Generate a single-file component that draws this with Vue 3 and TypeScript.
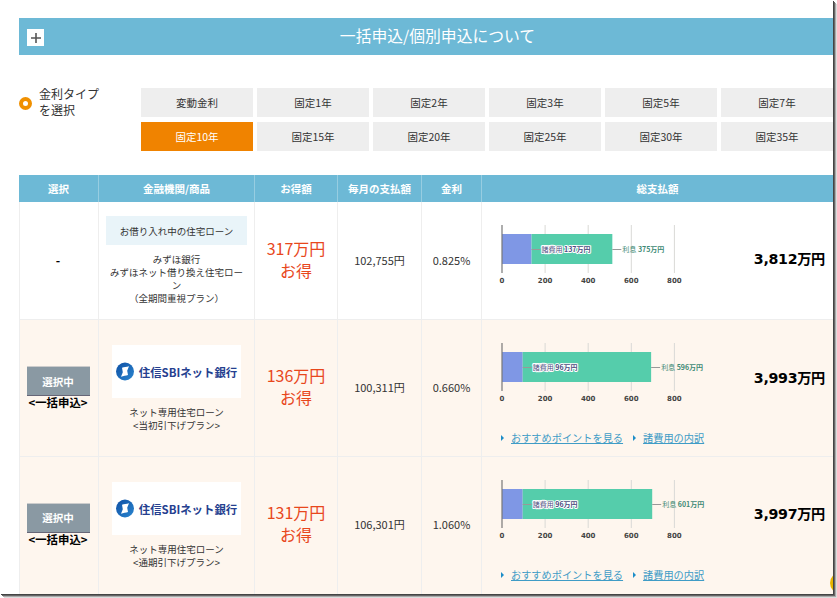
<script setup lang="ts">
interface Row {
  tinted: boolean
  saving: string
  monthly: string
  rate: string
  total: string
  feeLabel: string
  feeValue: number
  interest: number
  plan?: string
  links: boolean
}

const row2: Row = { tinted: true, saving: '136万円', monthly: '100,311円', rate: '0.660%', total: '3,993万円', feeLabel: '96万円', feeValue: 96, interest: 596, plan: '<当初引下げプラン>', links: true }
const row3: Row = { tinted: true, saving: '131万円', monthly: '106,301円', rate: '1.060%', total: '3,997万円', feeLabel: '96万円', feeValue: 96, interest: 601, plan: '<通期引下げプラン>', links: true }
const row1: Row = { tinted: false, saving: '317万円', monthly: '102,755円', rate: '0.825%', total: '3,812万円', feeLabel: '137万円', feeValue: 137, interest: 375, links: false }
const rows: Row[] = [row1, row2, row3]

const types: string[] = ['変動金利', '固定1年', '固定2年', '固定3年', '固定5年', '固定7年', '固定10年', '固定15年', '固定20年', '固定25年', '固定30年', '固定35年']
const heads: string[] = ['選択', '金融機関/商品', 'お得額', '毎月の支払額', '金利', '総支払額']
const ticks: number[] = [0, 200, 400, 600, 800]
const sx = (v: number): number => 1 + v * 0.2155
</script>

<template>
  <div class="shot">
    <div class="page">
      <div class="bar">
        <span class="plus"><svg width="12" height="12" viewBox="0 0 12 12"><path d="M6 1v10M1 6h10" stroke="#555" stroke-width="1.6" /></svg></span>
        <span class="bar-title">一括申込/個別申込について</span>
      </div>

      <div class="picker">
        <div class="picker-label">
          <span class="ring"></span>
          <span class="picker-text">金利タイプ<br />を選択</span>
        </div>
        <div class="types">
          <div v-for="t in types" :key="t" class="type" :class="{ on: t === '固定10年' }">{{ t }}</div>
        </div>
      </div>

      <div class="table">
        <div class="tr head">
          <div v-for="h in heads" :key="h" class="th">{{ h }}</div>
        </div>
        <div v-for="(r, i) in rows" :key="r.total" class="tr" :class="['r' + i, { tinted: r.tinted }]">
          <div class="td sel">
            <template v-if="r.tinted">
              <div class="sel-btn">選択中</div>
              <div class="sel-note">&lt;一括申込&gt;</div>
            </template>
            <b v-else class="dash">-</b>
          </div>
          <div class="td prod">
            <template v-if="r.tinted">
              <div class="logo">
                <svg width="18" height="19" viewBox="0 0 18 18">
                  <defs>
                    <linearGradient id="sbi" x1="0" y1="0" x2="1" y2="1">
                      <stop offset="0" stop-color="#0f4fa3" />
                      <stop offset="1" stop-color="#2a86d0" />
                    </linearGradient>
                  </defs>
                  <circle cx="9" cy="9" r="9" fill="url(#sbi)" />
                  <path d="M6 5.2C8 4.6 10.5 4.6 13 3.8L11.2 8.2 12 12.6C10 13.4 7.5 13.4 5 14.2L6.8 9.8z" fill="#fff" />
                </svg>
                <span class="logo-text">住信SBIネット銀行</span>
              </div>
              <div class="prod-name">ネット専用住宅ローン<br />{{ r.plan }}</div>
            </template>
            <template v-else>
              <div class="current">お借り入れ中の住宅ローン</div>
              <div class="prod-name">みずほ銀行<br />みずほネット借り換え住宅ロー<br />ン<br />（全期間重視プラン）</div>
            </template>
          </div>
          <div class="td saving">{{ r.saving }}<br />お得</div>
          <div class="td num">{{ r.monthly }}</div>
          <div class="td num">{{ r.rate }}</div>
          <div class="td cost">
            <div class="cost-main">
              <svg class="chart" width="200" height="62" viewBox="0 0 200 62">
                <line v-for="t in ticks.slice(1)" :key="t" :x1="sx(t)" :x2="sx(t)" y1="0" y2="48" stroke="#d9d9d6" stroke-width="1" />
                <rect x="1" y="9" :width="sx(r.feeValue) - 1" height="30" fill="#7f97e5" />
                <rect :x="sx(r.feeValue)" y="9" :width="r.interest * 0.2155" height="30" fill="#55cdab" />
                <line x1="1" x2="1" y1="0" y2="48" stroke="#777" stroke-width="1.2" />
                <line :x1="sx(r.feeValue)" :x2="sx(r.feeValue) + 9" y1="24.5" y2="24.5" stroke="#999" />
                <line :x1="sx(r.feeValue + r.interest)" :x2="sx(r.feeValue + r.interest) + 9" y1="24.5" y2="24.5" stroke="#999" />
                <text :x="sx(r.feeValue) + 10" y="27" class="lab fee">諸費用 <tspan class="lab-b">{{ r.feeLabel }}</tspan></text>
                <text :x="sx(r.feeValue + r.interest) + 10" y="27" class="lab int">利息 <tspan class="lab-b">{{ r.interest }}万円</tspan></text>
                <text v-for="t in ticks" :key="'x' + t" :x="sx(t)" y="58" class="tick">{{ t }}</text>
              </svg>
              <div class="total">{{ r.total }}</div>
            </div>
            <div v-if="r.links" class="links">
              <span class="tri"></span><a class="link">おすすめポイントを見る</a>
              <span class="tri second"></span><a class="link">諸費用の内訳</a>
            </div>
          </div>
        </div>
      </div>
      <span class="coin"></span>
    </div>
  </div>
</template>

<style>
html, body { margin: 0; background: #fff; }
</style>

<style scoped>
.shot {
  width: 837px;
  height: 598px;
  overflow: hidden;
  font-family: "Noto Sans CJK JP", "Noto Sans", sans-serif;
  color: #333;
  background: #fff;
}
.page {
  box-sizing: border-box;
  position: relative;
  width: 833px;
  height: 594px;
  padding: 18px 0 0 19px;
  box-shadow: 1px 1px 0 #444, 2px 2px 0 #666, 3px 3px 0 #aaa, 4px 4px 0 #ddd;
  overflow: hidden;
}
.coin {
  position: absolute;
  left: 830px;
  top: 572px;
  width: 22px;
  height: 22px;
  border-radius: 50%;
  background: #e8b400;
}
.bar {
  width: 814px;
  height: 37px;
  background: #6db9d6;
  display: flex;
  align-items: center;
  position: relative;
  justify-content: center;
  box-sizing: border-box;
  padding: 0 0 2px 23px;
}
.plus {
  position: absolute;
  left: 8px;
  top: 11px;
  width: 17px;
  height: 17px;
  background: #fff;
  display: flex;
  align-items: center;
  justify-content: center;
}
.bar-title { color: #fff; font-size: 15.8px; }
.picker { display: flex; margin-top: 33px; width: 814px; }
.picker-label { width: 122px; display: flex; align-items: center; height: 30px; }
.ring {
  box-sizing: border-box;
  width: 13px;
  height: 13px;
  border: 4px solid #f09000;
  border-radius: 50%;
  margin-right: 7px;
}
.picker-text { font-size: 12px; line-height: 16px; padding-bottom: 2px; }
.types {
  display: grid;
  grid-template-columns: repeat(6, 112px);
  grid-auto-rows: 29px;
  gap: 5px 4px;
}
.type {
  background: #eee;
  font-size: 10.5px;
  display: flex;
  align-items: center;
  justify-content: center;
}
.type.on { background: #f08300; color: #fff; }
.table { margin-top: 24px; width: 814px; }
.tr {
  display: grid;
  grid-template-columns: 79px 156px 83px 84px 60px 352px;
  border-bottom: 1px solid #eee;
  box-sizing: border-box;
}
.head { height: 27px; background: #6db9d6; border-bottom: 0; }
.th {
  color: #fff;
  font-size: 10.5px;
  font-weight: 700;
  display: flex;
  align-items: center;
  justify-content: center;
  border-left: 1px solid #97cde1;
}
.th:first-child { border-left: 0; }
.r0 { height: 118px; }
.r1 { height: 137px; }
.r2 { height: 138px; }
.tinted { background: #fef6ee; }
.td {
  box-sizing: border-box;
  border-left: 1px solid #eee;
  display: flex;
  flex-direction: column;
  align-items: center;
  justify-content: center;
  font-size: 11px;
}
.sel { color: #000; padding-right: 2px; }
.r2 .sel { padding-bottom: 2px; }
.dash { font-size: 12px; padding-bottom: 2px; }
.sel-btn {
  width: 63px;
  height: 30px;
  background: #8a99a3;
  border-top: 1px solid #ccc;
  border-bottom: 1px solid #667;
  box-sizing: border-box;
  color: #fff;
  font-size: 10.5px;
  font-weight: 700;
  display: flex;
  align-items: center;
  justify-content: center;
}
.sel-note { font-size: 11.4px; font-weight: 700; line-height: 13px; margin-bottom: 1px; }
.prod { font-size: 9.5px; justify-content: flex-start; }
.logo {
  width: 129px;
  height: 53px;
  background: #fff;
  margin-top: 25px;
  display: flex;
  align-items: center;
  justify-content: center;
  gap: 5px;
}
.logo-text { color: #25408f; font-size: 11.4px; font-weight: 700; white-space: nowrap; }
.prod-name {
  font-family: "Liberation Sans", "Noto Sans CJK JP", sans-serif;
  text-align: center;
  line-height: 13px;
  margin-top: 8px;
  white-space: nowrap;
}
.current {
  width: 141px;
  height: 29px;
  background: #e9f4f9;
  margin-top: 14px;
  display: flex;
  align-items: center;
  justify-content: center;
}
.saving { color: #e8471c; font-size: 16px; line-height: 22px; text-align: center; padding-bottom: 4px; }
.r2 .saving { padding-bottom: 6px; }
.num { font-size: 11px; padding-bottom: 2px; }
.r2 .num { padding-bottom: 4px; }
.cost { display: block; position: relative; padding: 0; }
.cost-main { display: flex; justify-content: space-between; }
.chart { margin: 23px 0 0 19px; overflow: visible; }
.total {
  color: #000;
  font-size: 14.2px;
  font-weight: 700;
  font-family: "DejaVu Sans", "Noto Sans CJK JP", sans-serif;
  margin: 46px 8px 0 0;
  letter-spacing: -0.3px;
}
.r1 .total { margin-top: 47px; }
.lab {
  font-size: 7px;
  fill: #444;
  font-family: "Noto Sans CJK JP", sans-serif;
  paint-order: stroke;
}
.lab-b { font-weight: 700; }
.lab.fee { fill: #4d4d80; stroke: #fff; stroke-width: 2px; stroke-linejoin: round; }
.lab.int { fill: #3e8a75; }
.tick { font-size: 7px; font-weight: 700; fill: #444; text-anchor: middle; font-family: "DejaVu Sans", sans-serif; }
.links {
  position: absolute;
  left: 19px;
  top: 110px;
  display: flex;
  align-items: center;
  font-size: 10.2px;
}
.tri {
  width: 0;
  height: 0;
  border-left: 3px solid #1d8dc8;
  border-top: 3px solid transparent;
  border-bottom: 3px solid transparent;
  margin-right: 7px;
}
.tri.second { margin-left: 10px; }
.link { color: #3f9cc6; text-decoration: underline; }
</style>
